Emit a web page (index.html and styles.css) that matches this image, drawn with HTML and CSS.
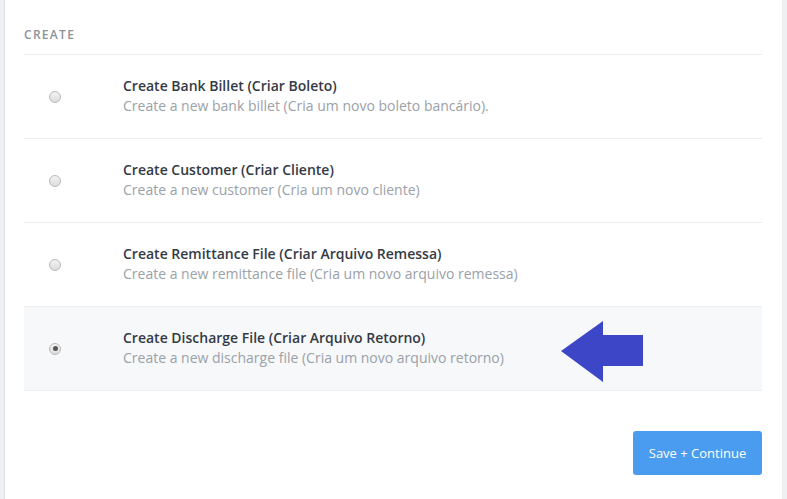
FILE: index.html
```html
<!DOCTYPE html>
<html>
<head>
<meta charset="utf-8">
<link rel="stylesheet" href="styles.css">
</head>
<body>
<div class="page">
  <div class="card">
    <div class="section-label">CREATE</div>
    <ul class="options">
      <li class="option">
        <span class="radio"></span>
        <div class="text">
          <div class="title">Create Bank Billet (Criar Boleto)</div>
          <div class="desc">Create a new bank billet (Cria um novo boleto bancário).</div>
        </div>
      </li>
      <li class="option">
        <span class="radio"></span>
        <div class="text">
          <div class="title">Create Customer (Criar Cliente)</div>
          <div class="desc">Create a new customer (Cria um novo cliente)</div>
        </div>
      </li>
      <li class="option">
        <span class="radio"></span>
        <div class="text">
          <div class="title">Create Remittance File (Criar Arquivo Remessa)</div>
          <div class="desc">Create a new remittance file (Cria um novo arquivo remessa)</div>
        </div>
      </li>
      <li class="option selected">
        <span class="radio checked"></span>
        <div class="text">
          <div class="title">Create Discharge File (Criar Arquivo Retorno)</div>
          <div class="desc">Create a new discharge file (Cria um novo arquivo retorno)</div>
        </div>
        <svg class="arrow" width="82" height="61" viewBox="0 0 82 61">
          <polygon points="0,30 42,0 42,14 82,14 82,45 42,45 42,61" fill="#3e46c8"/>
        </svg>
      </li>
    </ul>
    <div class="actions">
      <button class="btn">Save + Continue</button>
    </div>
  </div>
</div>
</body>
</html>
```
FILE: styles.css
```css
* { box-sizing: border-box; }
html, body { margin: 0; padding: 0; }
body {
  font-family: "Open Sans", "Liberation Sans", sans-serif;
  background: #eef0f2;
  height: 499px;
  overflow: hidden;
}
.page {
  height: 499px;
  padding: 0 5px 0 4px;
}
.card {
  background: #fff;
  height: 100%;
  border-left: 1px solid #dfe3e6;
  padding: 0 20px 0 19px;
}
.section-label {
  padding-top: 27px;
  height: 55px;
  font-size: 12px;
  font-weight: 600;
  letter-spacing: 1.3px;
  color: #8c9299;
  line-height: 16px;
  border-bottom: 1px solid #eceef0;
}
.options {
  list-style: none;
  margin: 0;
  padding: 0;
}
.option {
  position: relative;
  display: flex;
  align-items: center;
  height: 84px;
  border-bottom: 1px solid #eceef0;
  padding-left: 25px;
}
.option.selected { background: #f7f8fa; }
.radio {
  width: 12px;
  height: 12px;
  border-radius: 50%;
  border: 1px solid #b9b9b9;
  background: linear-gradient(#f3f3f3, #dcdcdc);
  flex: none;
  margin-top: 0;
  margin-right: 62px;
  display: flex;
  align-items: center;
  justify-content: center;
}
.radio.checked::after {
  content: "";
  width: 5px;
  height: 5px;
  border-radius: 50%;
  background: #555;
}
.text { margin-top: -1px; }
.title {
  font-size: 14px;
  font-weight: 600;
  color: #343a44;
  line-height: 20px;
}
.desc {
  font-size: 14px;
  color: #9aa1a8;
  line-height: 20px;
}
.arrow {
  position: absolute;
  left: 537px;
  top: 14px;
}
.actions {
  display: flex;
  justify-content: flex-end;
  padding-top: 40px;
}
.btn {
  width: 129px;
  height: 44px;
  background: #4a9cf0;
  color: #fff;
  border: none;
  border-radius: 3px;
  font-family: "Open Sans", "Liberation Sans", sans-serif;
  font-size: 13px;
}
```
